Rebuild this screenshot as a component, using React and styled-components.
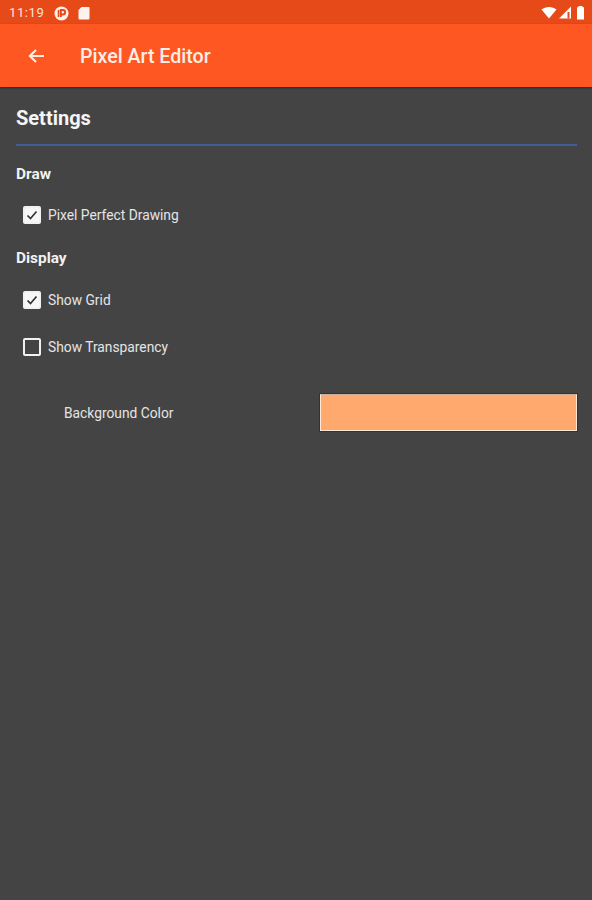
import React from "react";
import styled, { createGlobalStyle } from "styled-components";

const Global = createGlobalStyle`
  html, body { margin: 0; padding: 0; background: #444444; }
  body { font-family: Roboto, "Liberation Sans", sans-serif; }
`;
const Page = styled.div`
  width: 592px; height: 900px; background: #444444; display: flex; flex-direction: column; overflow: hidden;
`;
const StatusBar = styled.div`
  height: 24px; background: #e64a19; display: flex; align-items: center; padding: 0 6px 0 9px; color: #fbe9e0; flex: none;
`;
const Clock = styled.span`
  font-size: 13px; letter-spacing: 0.6px; color: #fbe4da; margin: 1px 9px 0 0; width: 36px;
`;
const StatusIcons = styled.div`
  display: flex; align-items: center; gap: 9px; margin-top: 2px;
`;
const StatusRight = styled.div`
  margin-left: auto; display: flex; align-items: center; gap: 1px;
`;
const AppBar = styled.div`
  height: 63px; background: #ff5722; display: flex; align-items: center; padding-left: 27px; flex: none;
  box-shadow: 0 1px 2px rgba(0,0,0,0.45);
  position: relative;
`;
const Title = styled.h1`
  margin: 0 0 0 35px; font-size: 19.6px; font-weight: 500; color: #fdeee8; line-height: 1; position: relative; top: 1px;
`;
const Content = styled.div`
  padding: 18px 15px 0 16px; display: flex; flex-direction: column;
`;
const Heading = styled.div`
  font-size: 20px; font-weight: 700; color: #f5f5f5; line-height: 24px; position: relative; top: 1px;
`;
const Divider = styled.div`
  height: 2px; background: #3f5f95; margin: 15px 0 0;
`;
const Section = styled.div`
  font-size: 15.4px; font-weight: 700; color: #f2f2f2; line-height: 18px; margin-top: ${p => p.$top}px;
`;
const Row = styled.label`
  display: flex; align-items: center; height: 20px; padding-left: 7px; margin-top: ${p => p.$top}px;
`;
const Box = styled.span`
  width: 18px; height: 18px; border-radius: 2px; box-sizing: border-box; flex: none;
  display: flex; align-items: center; justify-content: center;
  background: ${p => (p.$on ? "#f7f7f7" : "transparent")};
  border: 2px solid #f2f2f2;
`;
const RowLabel = styled.span`
  font-size: 13.8px; color: #e4e4e4; margin-left: 7px; line-height: 16px;
`;
const ColorRow = styled.div`
  display: flex; align-items: center; margin-top: 37px; height: 37px;
`;
const ColorLabel = styled.span`
  font-size: 13.8px; color: #e4e4e4; padding-left: 48px; width: 304px; box-sizing: border-box;
`;
const Swatch = styled.div`
  flex: 1; height: 37px; background: #ffa96f; box-sizing: border-box;
  border: 1px solid #ffe9d6; border-top-color: #c9b09c;
  box-shadow: 0 0 0 1px #333;
`;

const Check = () => (
  <svg width="14" height="14" viewBox="0 0 14 14">
    <path d="M2.5 7.5 L5.5 10.5 L11.5 3.5" fill="none" stroke="#333" strokeWidth="1.7" />
  </svg>
);

export default function App() {
  return (
    <Page>
      <Global />
      <StatusBar>
        <Clock>11:19</Clock>
        <StatusIcons>
          <svg width="15" height="15" viewBox="0 0 15 15">
            <circle cx="7.5" cy="7.5" r="7" fill="#fdf3ee" />
            <path d="M4.5 4v7" stroke="#e64a19" strokeWidth="1.6" />
            <path d="M6.8 11V4h2a2.2 2.2 0 0 1 0 4.6H6.8" fill="none" stroke="#e64a19" strokeWidth="2" />
          </svg>
          <svg width="12" height="14" viewBox="0 0 12 14">
            <path d="M3.5 1H10.5a1 1 0 0 1 1 1v10.5a1 1 0 0 1-1 1H1.5a1 1 0 0 1-1-1V4z" fill="#fdf3ee" />
          </svg>
        </StatusIcons>
        <StatusRight>
          <svg width="16" height="13" viewBox="0 0 16 13">
            <path d="M0.5 3.5C4.5 0 11.5 0 15.5 3.5L8 12.5z" fill="#fff" />
          </svg>
          <svg width="14" height="13" viewBox="0 0 14 13">
            <path d="M13 0.5V12.5H1z" fill="#fff" />
            <path d="M9.5 6h2v6.5h-2z" fill="#e64a19" />
          </svg>
          <svg width="11" height="15" viewBox="0 0 11 15" style={{ marginLeft: 2 }}>
            <path d="M3.5 1h4v1.2h1.5v12.3H2V2.2h1.5z" fill="#fff" />
          </svg>
        </StatusRight>
      </StatusBar>
      <AppBar>
        <svg width="18" height="18" viewBox="0 0 18 18">
          <path d="M17 9H3M9 3L2.8 9L9 15" fill="none" stroke="#fdeee8" strokeWidth="2" />
        </svg>
        <Title>Pixel Art Editor</Title>
      </AppBar>
      <Content>
        <Heading>Settings</Heading>
        <Divider />
        <Section $top={19}>Draw</Section>
        <Row $top={22}>
          <Box $on><Check /></Box>
          <RowLabel>Pixel Perfect Drawing</RowLabel>
        </Row>
        <Section $top={24}>Display</Section>
        <Row $top={23}>
          <Box $on><Check /></Box>
          <RowLabel>Show Grid</RowLabel>
        </Row>
        <Row $top={27}>
          <Box />
          <RowLabel>Show Transparency</RowLabel>
        </Row>
        <ColorRow>
          <ColorLabel>Background Color</ColorLabel>
          <Swatch />
        </ColorRow>
      </Content>
    </Page>
  );
}
